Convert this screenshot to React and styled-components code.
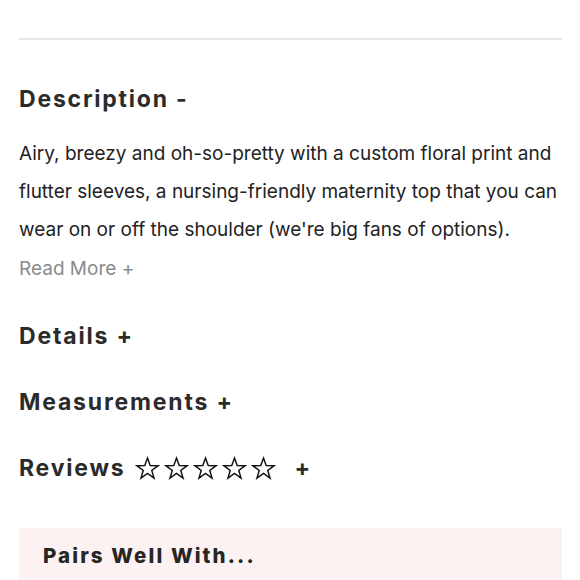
import React from "react";
import styled, { createGlobalStyle } from "styled-components";

const Global = createGlobalStyle`
  body {
    margin: 0;
    background: #fff;
    font-family: "Inter", "Noto Sans", sans-serif;
    color: #222;
  }
`;

const Page = styled.div`
  width: 580px;
  height: 580px;
  overflow: hidden;
  padding: 0 19px;
  box-sizing: border-box;
`;

const Divider = styled.hr`
  margin: 38px 0 0;
  border: 0;
  border-top: 2px solid #e6e6e6;
  width: 543px;
`;

const Heading = styled.h2`
  margin: ${(p) => p.mt || "0"} 0 0;
  font-size: 23px;
  font-weight: 700;
  letter-spacing: 1.8px;
  color: #2b2b2b;
  display: flex;
  align-items: center;
  line-height: 30px;
`;

const Body = styled.p`
  margin: 21px 0 0;
  font-size: 19px;
  line-height: 38px;
  color: #222;
`;

const ReadMore = styled.a`
  display: block;
  margin-top: 7px;
  font-size: 19px;
  color: #8a8a8a;
  line-height: 26px;
`;

const Stars = styled.span`
  display: inline-flex;
  gap: 4px;
  margin-left: 9px;
  margin-right: 19px;
`;

const Star = () => (
  <svg width="25" height="25" viewBox="0 0 24 24" fill="none" stroke="#111" strokeWidth="1.4" strokeLinejoin="miter">
    <polygon points="12,2 14.6,9.2 22.2,9.3 16.1,13.9 18.3,21.2 12,16.8 5.7,21.2 7.9,13.9 1.8,9.3 9.4,9.2" />
  </svg>
);

const Pairs = styled.section`
  margin-top: 45px;
  width: 543px;
  background: #fdf2f2;
  padding: 15px 24px 0;
  box-sizing: border-box;
  height: 60px;
`;

const PairsTitle = styled.h3`
  margin: 0;
  font-size: 20.5px;
  font-weight: 800;
  letter-spacing: 2.1px;
  color: #262626;
`;

export default function App() {
  return (
    <>
      <Global />
      <Page>
        <Divider />
        <Heading mt="44px">Description -</Heading>
        <Body>
          Airy, breezy and oh-so-pretty with a custom floral print and flutter
          sleeves, a nursing-friendly maternity top that you can wear on or off
          the shoulder (we're big fans of options).
        </Body>
        <ReadMore>Read More +</ReadMore>
        <Heading mt="39px">Details +</Heading>
        <Heading mt="36px">Measurements +</Heading>
        <Heading mt="36px">
          Reviews
          <Stars>
            <Star />
            <Star />
            <Star />
            <Star />
            <Star />
          </Stars>
          +
        </Heading>
        <Pairs>
          <PairsTitle>Pairs Well With...</PairsTitle>
        </Pairs>
      </Page>
    </>
  );
}
